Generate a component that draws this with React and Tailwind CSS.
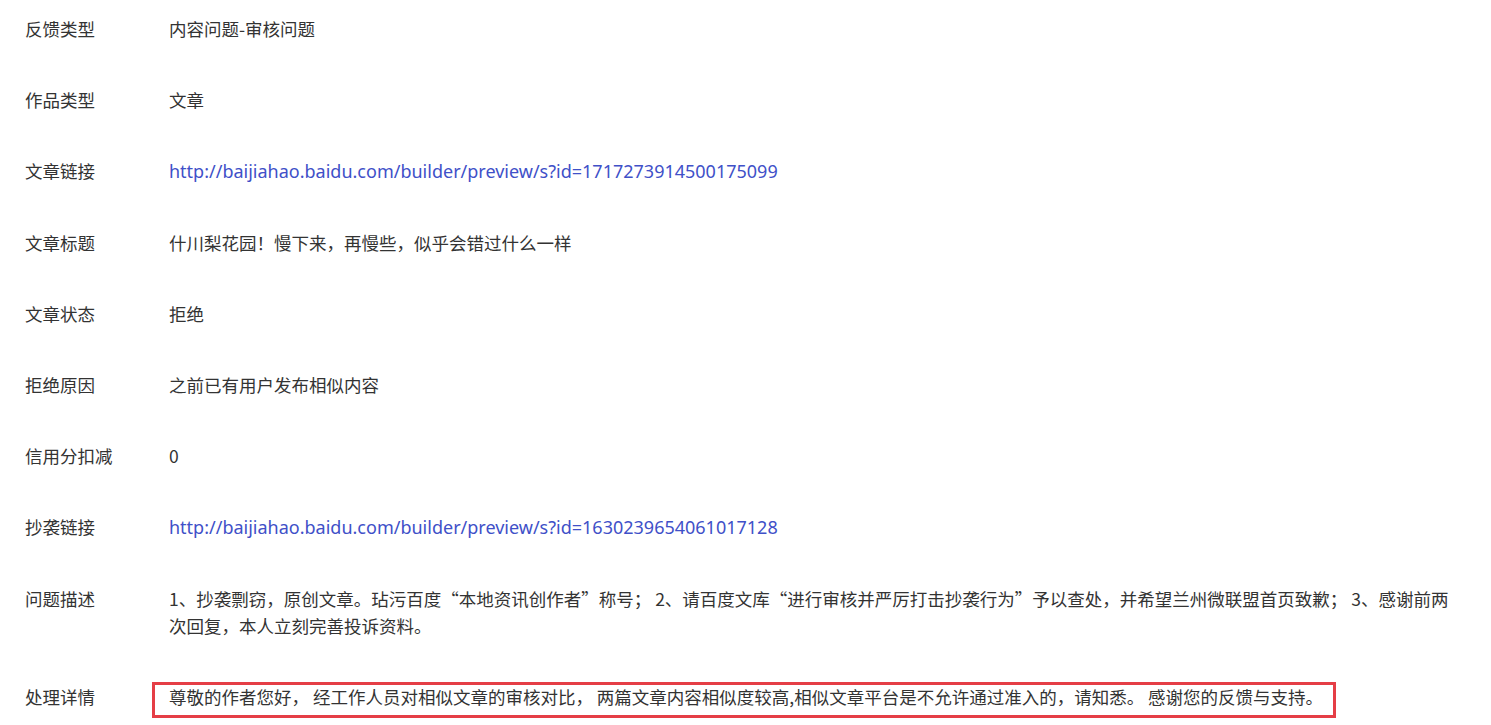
import React from 'react';

const rows = [
    { label: '反馈类型', value: '内容问题-审核问题' },
    { label: '作品类型', value: '文章' },
    { label: '文章链接', value: 'http://baijiahao.baidu.com/builder/preview/s?id=1717273914500175099', link: true },
    { label: '文章标题', value: '什川梨花园！慢下来，再慢些，似乎会错过什么一样' },
    { label: '文章状态', value: '拒绝' },
    { label: '拒绝原因', value: '之前已有用户发布相似内容' },
    { label: '信用分扣减', value: '0' },
    { label: '抄袭链接', value: 'http://baijiahao.baidu.com/builder/preview/s?id=1630239654061017128', link: true },
    {
        label: '问题描述',
        value: '1、抄袭剽窃，原创文章。玷污百度“本地资讯创作者”称号； 2、请百度文库“进行审核并严厉打击抄袭行为”予以查处，并希望兰州微联盟首页致歉； 3、感谢前两次回复，本人立刻完善投诉资料。',
    },
];

const App = () => {
    return (
        <div
            className="min-h-screen bg-white pt-[15px] pl-[25px] pr-[40px] text-[17.5px] leading-[27px] text-[#333333]"
            style={{ fontFamily: '"Microsoft YaHei", "Noto Sans CJK SC", sans-serif' }}
        >
            {rows.map((row) => (
                <div key={row.label} className="flex mb-[44px]">
                    <div className="w-[144px] shrink-0">{row.label}</div>
                    <div className="flex-1 min-w-0">
                        {row.link ? (
                            <a className="text-[#4050c8] text-[18px] font-['Noto_Sans','Noto_Sans_CJK_SC',sans-serif]">{row.value}</a>
                        ) : (
                            row.value
                        )}
                    </div>
                </div>
            ))}

            {/* Handling detail, with the red highlight box */}
            <div className="flex">
                <div className="w-[144px] shrink-0">处理详情</div>
                <div className="flex-1 min-w-0 relative">
                    尊敬的作者您好， 经工作人员对相似文章的审核对比， 两篇文章内容相似度较高,相似文章平台是不允许通过准入的，请知悉。 感谢您的反馈与支持。
                    <span className="absolute left-[-17px] top-[-1px] w-[1184px] h-[36px] border-[3px] border-[#e53e46] pointer-events-none" />
                </div>
            </div>
        </div>
    );
};

export default App;
